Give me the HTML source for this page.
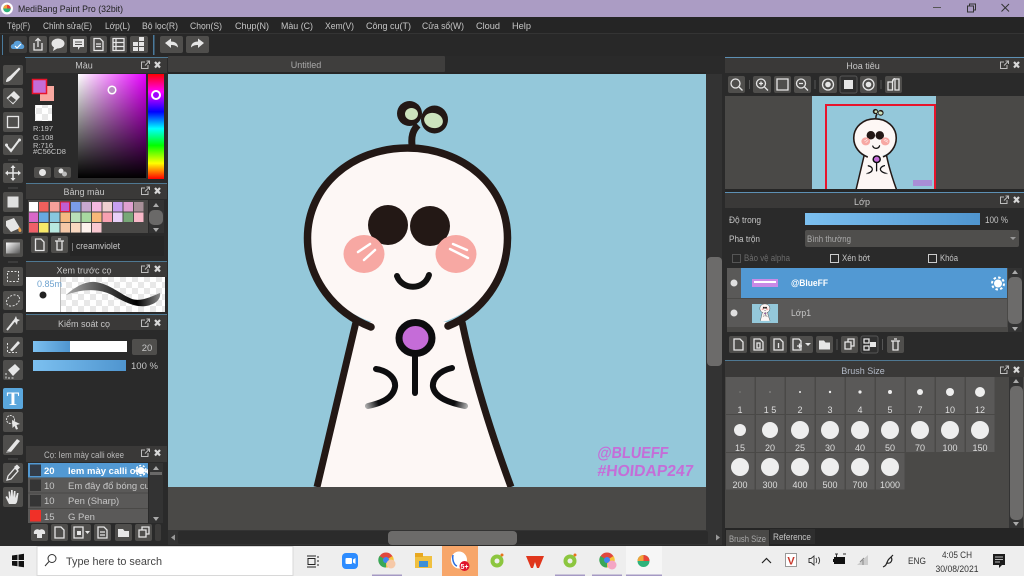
<!DOCTYPE html>
<html><head><meta charset="utf-8"><title>MediBang Paint Pro</title>
<style>
html,body{margin:0;padding:0;background:#262626;overflow:hidden}
svg{display:block;filter:blur(.3px)}
text{font-family:"Liberation Sans",sans-serif;font-size:9px;fill:#c6c6c6}
.b{fill:#4f4e4c}
.ti{fill:#3a3938}
.c{text-anchor:middle}
.w{fill:none;stroke:#e6e6e6;stroke-width:1.3}
.f{fill:#e6e6e6}
.s{fill:#5a5958}
.m{font-size:9.5px}
.k{fill:#222;font-size:9.5px}
</style></head><body>
<svg xmlns="http://www.w3.org/2000/svg" width="1024" height="576" viewBox="0 0 1024 576">
<defs>
<linearGradient id="blue" x1="0" x2="1" y1="0" y2="0"><stop offset="0" stop-color="#7cc0f0"/><stop offset="1" stop-color="#4f95cf"/></linearGradient>
<linearGradient id="pk" x1="0" x2="1" y1="0" y2="0"><stop offset="0" stop-color="#fff"/><stop offset="1" stop-color="#e600ff"/></linearGradient>
<linearGradient id="bk" x1="0" x2="0" y1="0" y2="1"><stop offset="0" stop-color="#000" stop-opacity="0"/><stop offset="1" stop-color="#000"/></linearGradient>
<linearGradient id="hue" x1="0" x2="0" y1="0" y2="1"><stop offset="0" stop-color="#f00"/><stop offset=".17" stop-color="#f0f"/><stop offset=".36" stop-color="#00f"/><stop offset=".52" stop-color="#0ff"/><stop offset=".68" stop-color="#0f0"/><stop offset=".85" stop-color="#ff0"/><stop offset="1" stop-color="#f00"/></linearGradient>
<linearGradient id="stk" x1="0" x2="1" y1="0" y2="0"><stop offset="0" stop-color="#aaa"/><stop offset=".35" stop-color="#555"/><stop offset=".75" stop-color="#000"/><stop offset="1" stop-color="#888"/></linearGradient>
<linearGradient id="grad" x1="0" x2="1" y1="0" y2="1"><stop offset="0" stop-color="#fff"/><stop offset="1" stop-color="#555"/></linearGradient>
<linearGradient id="fl" gradientUnits="userSpaceOnUse" x1="366" x2="378" y1="406" y2="402"><stop offset="0" stop-color="#aaa"/><stop offset="1" stop-color="#0d0d0f"/></linearGradient>
<linearGradient id="fr" gradientUnits="userSpaceOnUse" x1="467" x2="455" y1="406" y2="402"><stop offset="0" stop-color="#aaa"/><stop offset="1" stop-color="#0d0d0f"/></linearGradient>
<pattern id="chk" width="12" height="12" patternUnits="userSpaceOnUse"><rect width="12" height="12" fill="#fff"/><rect width="6" height="6" fill="#e8e8e8"/><rect x="6" y="6" width="6" height="6" fill="#e8e8e8"/></pattern>
<clipPath id="navc"><rect x="812" y="96" width="124" height="93"/></clipPath>
<clipPath id="lay"><rect x="752" y="304" width="26" height="19"/></clipPath>
<clipPath id="lst"><rect x="28" y="463" width="120" height="60"/></clipPath>
<g id="po"><path d="M-1 -3H-4.5V3.5H2V0M-1 0.5L3 -3.5M0.5 -4H3.5V-1" fill="none" stroke="#bdbdbd" stroke-width="1"/><path d="M9 -3L14 2.5M14 -3L9 2.5" stroke="#d8d8d8" stroke-width="2.2"/></g>
<g id="art">
<path d="M355 322L317 487H511C490 430 474 375 463 322Z" fill="#fdf7f5"/>
<ellipse cx="407.500" cy="238" rx="100" ry="90" fill="#fdf7f5"/>
<path d="M371 327C335 313 307.500 280 307.500 238C307.500 186 352 148 407.500 148C463 148 507.500 186 507.500 238C507.500 280 480 313 448 326" fill="none" stroke="#231815" stroke-width="7.500" stroke-linecap="round"/>
<path d="M356 322L317 487M462 322C473 375 490 430 511 487" fill="none" stroke="#231815" stroke-width="7"/>
<path d="M412 145C411 136 413 130 418 125" fill="none" stroke="#231815" stroke-width="7"/>
<ellipse cx="409.500" cy="113.500" rx="12.500" ry="12.500" fill="#231815"/>
<ellipse cx="434.500" cy="119.500" rx="13.500" ry="14" fill="#231815"/>
<ellipse cx="411.500" cy="114" rx="6.500" ry="6" fill="#cde3bd"/>
<ellipse cx="433.500" cy="120.500" rx="9.500" ry="7.500" transform="rotate(15 433.500 120.500)" fill="#cde3bd"/>
<circle cx="388" cy="225" r="20" fill="#231815"/><circle cx="430" cy="226" r="20" fill="#231815"/>
<ellipse cx="364" cy="254" rx="20.500" ry="19" fill="#f7a8a3"/><ellipse cx="456" cy="254" rx="20.500" ry="19" fill="#f7a8a3"/>
<path d="M358 252L370 244M364 260L375 250M453 244L467 250M450 249L468 258" stroke="#fff" stroke-width="2.500" stroke-linecap="round"/>
<path d="M397 276C402 290 424 291 429 275" fill="none" stroke="#111" stroke-width="6" stroke-linecap="round"/>
<ellipse cx="415.500" cy="338" rx="16.500" ry="15.500" fill="#c56cd8" stroke="#0d0d0f" stroke-width="7"/>
<path d="M415 355V393" stroke="#0d0d0f" stroke-width="6" stroke-linecap="round"/>
<path d="M376 369C390 371 396 380 395 387C393 398 382 403 368 406" fill="none" stroke="url(#fl)" stroke-width="6" stroke-linecap="round"/>
<path d="M452 368C438 371 432 380 433 387C435 398 450 403 465 406" fill="none" stroke="url(#fr)" stroke-width="6" stroke-linecap="round"/>
</g>
</defs>

<!-- title bar -->
<rect width="1024" height="17" fill="#ab9cc4"/>
<circle cx="7" cy="8.500" r="6" fill="#fff"/><circle cx="7" cy="8.500" r="3.800" fill="#2fb37b"/><path d="M7 4.700A3.800 3.800 0 0 1 10.800 8.500H7Z" fill="#e8443a"/><path d="M3.200 8.500A3.800 3.800 0 0 1 7 4.700V8.500Z" fill="#f2a33a"/>
<text x="18" y="12" class="k" textLength="105" lengthAdjust="spacingAndGlyphs">MediBang Paint Pro (32bit)</text>
<path d="M933 7.500H941" stroke="#555" stroke-width="1"/>
<path d="M967.500 6H973.500V12H967.500ZM969.500 6V4H975.500V10H973.500" fill="none" stroke="#333" stroke-width="1"/>
<path d="M1001.500 4L1009 11.500M1009 4L1001.500 11.500" stroke="#333" stroke-width="1"/>

<!-- menu -->
<rect y="17" width="1024" height="16" fill="#252525"/>
<rect y="33" width="1024" height="1" fill="#343434"/>
<g class="mn">
<text x="7" y="29" class="m" textLength="23" lengthAdjust="spacingAndGlyphs">Tệp(F)</text>
<text x="43" y="29" class="m" textLength="49" lengthAdjust="spacingAndGlyphs">Chỉnh sửa(E)</text>
<text x="105" y="29" class="m" textLength="25" lengthAdjust="spacingAndGlyphs">Lớp(L)</text>
<text x="142" y="29" class="m" textLength="36" lengthAdjust="spacingAndGlyphs">Bộ lọc(R)</text>
<text x="190" y="29" class="m" textLength="32" lengthAdjust="spacingAndGlyphs">Chọn(S)</text>
<text x="235" y="29" class="m" textLength="34" lengthAdjust="spacingAndGlyphs">Chụp(N)</text>
<text x="281" y="29" class="m" textLength="32" lengthAdjust="spacingAndGlyphs">Màu (C)</text>
<text x="325" y="29" class="m" textLength="29" lengthAdjust="spacingAndGlyphs">Xem(V)</text>
<text x="366" y="29" class="m" textLength="45" lengthAdjust="spacingAndGlyphs">Công cụ(T)</text>
<text x="422" y="29" class="m" textLength="42" lengthAdjust="spacingAndGlyphs">Cửa sổ(W)</text>
<text x="476" y="29" class="m" textLength="24" lengthAdjust="spacingAndGlyphs">Cloud</text>
<text x="512" y="29" class="m" textLength="19" lengthAdjust="spacingAndGlyphs">Help</text>
</g>

<!-- toolbar -->
<rect y="34" width="1024" height="22" fill="#282828"/>
<rect x="2" y="35" width="1" height="20" fill="#4a7a9c"/>
<rect x="153" y="35" width="1.500" height="20" fill="#4a7a9c"/>
<rect x="9" y="36" width="18" height="17" rx="2" fill="#3f3e3d"/>
<path d="M13 49C10 49 10 44 13.500 44C14 40 21 39.500 22 44C25 44.500 25 49 22 49Z" fill="#5a9fd8"/>
<path d="M15 46L17 48L21 44" stroke="#fff" stroke-width="1.200" fill="none"/>
<rect x="29" y="36" width="18" height="17" rx="2" class="b"/><path d="M34 43V50H42V43M38 47V39M35.500 41L38 38.500L40.500 41" class="w"/>
<rect x="49" y="36" width="18" height="17" rx="2" class="b"/><ellipse cx="58" cy="43.500" rx="6.500" ry="5" class="f"/><path d="M54 47L53 51L58 48Z" class="f"/>
<rect x="70" y="36" width="17" height="17" rx="2" class="b"/><path d="M73 39H84V47H80L78 50V47H73Z" class="f"/><path d="M75 42H82M75 44.500H82" stroke="#4f4e4c"/>
<rect x="90" y="36" width="17" height="17" rx="2" class="b"/><path d="M94 38.500H100L103 41.500V50.500H94Z M96 44H101M96 46.500H101" class="w"/>
<rect x="110" y="36" width="17" height="17" rx="2" class="b"/><path d="M113 38.500H124V50.500H113ZM113 42.500H124M113 46.500H124M116 38.500V50.500" class="w"/>
<rect x="130" y="36" width="18" height="17" rx="2" class="b"/><path d="M133 42H138V46H133ZM139 42H144V46H139ZM133 47H138V51H133ZM139 47H144V51H139ZM139 37H144V41H139Z" class="f"/>
<rect x="160" y="36" width="23" height="17" rx="2" class="b"/><path d="M165 43L171 38.500V41.500C175 41.500 178 43.500 178 47.500C176 45.500 174 45 171 45V48Z" class="f"/>
<rect x="186" y="36" width="23" height="17" rx="2" class="b"/><path d="M204 43L198 38.500V41.500C194 41.500 191 43.500 191 47.500C193 45.500 195 45 198 45V48Z" class="f"/>

<!-- left column background -->
<rect y="56" width="168" height="490" fill="#2a2a2a"/>
<rect x="25" y="57" width="143" height="1" fill="#4f7892"/>

<!-- tools -->
<rect x="3" y="65" width="20" height="20" rx="2" class="b"/><path d="M6 82C6 79 8 77 10 76L19 67.500L20.500 69L12.500 78C11 80 9 82 6 82Z" class="f"/>
<rect x="3" y="88" width="20" height="20" rx="2" class="b"/><path d="M6.500 98L14 91L20 97L13 104.500Z" class="f"/><path d="M8 99L13 103L16 100L11 96Z" fill="#4f4e4c"/>
<rect x="3" y="112" width="20" height="20" rx="2" class="b"/><rect x="7.500" y="116.500" width="11" height="11" class="w"/>
<rect x="3" y="135" width="20" height="20" rx="2" class="b"/><path d="M6 145L11 151L20 139" fill="none" stroke="#e6e6e6" stroke-width="2"/><circle cx="6.500" cy="145" r="1.500" class="f"/><circle cx="11" cy="150" r="1.500" class="f"/><circle cx="19.500" cy="140" r="1.500" class="f"/>
<path d="M8 160H18M8 188H18M8 262H18M8 459H18" stroke="#4d4d4d"/>
<rect x="3" y="163" width="20" height="20" rx="2" class="b"/><path d="M13 166V180M6 173H20" stroke="#e6e6e6" stroke-width="1.500"/><path d="M13 165L10.500 168H15.500ZM13 181L10.500 178H15.500ZM5 173L8 170.500V175.500ZM21 173L18 170.500V175.500Z" class="f"/>
<rect x="3" y="192" width="20" height="20" rx="2" class="b"/><rect x="7.500" y="196.500" width="11" height="11" fill="#e0e0e0"/>
<rect x="3" y="216" width="20" height="18" rx="2" class="b"/><path d="M6 221L14 218L20 228L11 232L6 226Z" class="f"/><path d="M19 227C22 229 22 232 20 232C18 232 18 229 19 227Z" fill="#e8a04a"/>
<rect x="3" y="239" width="20" height="18" rx="2" class="b"/><rect x="6" y="242.500" width="14" height="11" fill="url(#grad)"/>
<rect x="3" y="267" width="20" height="19" rx="2" class="b"/><rect x="7.500" y="271.500" width="11" height="10" fill="none" stroke="#ddd" stroke-dasharray="2 1.500"/>
<rect x="3" y="291" width="20" height="19" rx="2" class="b"/><ellipse cx="13" cy="300.500" rx="7" ry="5" transform="rotate(-30 13 300.500)" fill="none" stroke="#ddd" stroke-dasharray="2 1.500"/>
<rect x="3" y="313" width="20" height="20" rx="2" class="b"/><path d="M7 330L15 320" stroke="#e6e6e6" stroke-width="2"/><path d="M16 316L17 319L20 320L17.500 321.500L17 325L15 322L12 322L14 320Z" class="f"/>
<rect x="3" y="337" width="20" height="20" rx="2" class="b"/><path d="M7.500 343V352.500H17" fill="none" stroke="#ddd" stroke-dasharray="2 1.500"/><path d="M10 350L18 341L20 343L12 351.500Z" class="f"/>
<rect x="3" y="360" width="20" height="20" rx="2" class="b"/><path d="M8 370L15 364L20 369L13 376Z" class="f"/><path d="M6 373V378H14" fill="none" stroke="#ddd" stroke-dasharray="2 1.500"/>
<rect x="3" y="388" width="20" height="21" rx="2" fill="#5aa7dd"/>
<text x="13" y="405" class="c" style="font-family:'Liberation Serif',serif;font-size:19px;font-weight:bold;fill:#fff">T</text>
<rect x="3" y="412" width="20" height="20" rx="2" class="b"/><circle cx="10.500" cy="419.500" r="4" fill="none" stroke="#ddd" stroke-dasharray="2 1"/><path d="M12 420L20 424L16.500 425L18 429L16 429.500L14.500 426L12.500 428Z" class="f"/>
<rect x="3" y="435" width="20" height="20" rx="2" class="b"/><path d="M7 451L17 439L20 441L11 452Z" class="f"/><path d="M7 451L11 452L6 453Z" fill="#aaa"/>
<rect x="3" y="463" width="20" height="20" rx="2" class="b"/><path d="M7 480L8 476L15 468L18 471L11 479Z" fill="none" stroke="#e6e6e6" stroke-width="1.300"/><path d="M14 467L17 464.500L20 467.500L17.500 470Z" class="f"/>
<rect x="3" y="487" width="20" height="20" rx="2" class="b"/><path d="M9 504L5.500 497L7 496L9 499L8.500 491.500H10L11 497L11 490H12.700L13 497L14 491H15.500L15.500 498L17 493H18.500L17.500 500C17 503 16 504 15 504Z" class="f"/>

<!-- colour panel -->
<rect x="26" y="58" width="141" height="15" class="ti"/>
<text x="84" y="68.500" class="c">Màu</text><use href="#po" x="146" y="65"/>
<rect x="40" y="86" width="14" height="15" fill="#f8a8a0"/>
<rect x="32.500" y="79.500" width="14" height="14" fill="#c56cd8" stroke="#e8142c" stroke-width="1.500"/>
<rect x="35" y="105" width="17" height="16" fill="url(#chk)"/>
<g><text x="33" y="131" style="font-size:7.500px">R:197</text><text x="33" y="140" style="font-size:7.500px">G:108</text><text x="33" y="148" style="font-size:7.500px">R:716</text><text x="33" y="154" style="font-size:7.500px">#C56CD8</text></g>
<rect x="34" y="167" width="17" height="11" rx="2" class="b"/><circle cx="42.500" cy="172.500" r="3.500" class="f"/>
<rect x="54" y="167" width="17" height="11" rx="2" class="b"/><circle cx="61" cy="171" r="2.500" class="f"/><circle cx="64.500" cy="174" r="2.500" fill="#bbb"/>
<rect x="78" y="74" width="68" height="104" fill="url(#pk)"/><rect x="78" y="74" width="68" height="104" fill="url(#bk)"/>
<circle cx="112" cy="90" r="3.800" fill="#b88cc2" stroke="#fff" stroke-width="1.500"/>
<rect x="148" y="74" width="16" height="105" fill="url(#hue)"/>
<circle cx="156" cy="95" r="4" fill="#a000ff" stroke="#fff" stroke-width="2"/>
<rect x="26" y="183" width="141" height="1" fill="#4f7892"/>

<!-- palette panel -->
<rect x="26" y="184" width="141" height="15" class="ti"/>
<text x="84" y="195" class="c">Bảng màu</text><use href="#po" x="146" y="191"/>
<rect x="28" y="200" width="120" height="33" fill="#4a4947"/>
<g>
<rect x="29" y="202" width="9" height="9.500" fill="#fff"/><rect x="39" y="202" width="9.500" height="9.500" fill="#f0605c"/><rect x="50" y="202" width="9.500" height="9.500" fill="#f5a09a"/><rect x="60.500" y="202" width="9" height="9.500" fill="#c05ed0" stroke="#e0203a"/><rect x="71" y="202" width="9.500" height="9.500" fill="#7a9ce8"/><rect x="81.500" y="202" width="9.500" height="9.500" fill="#c8a8d0"/><rect x="92" y="202" width="9.500" height="9.500" fill="#f5b8e0"/><rect x="102.500" y="202" width="9.500" height="9.500" fill="#f0d0d0"/><rect x="113" y="202" width="9.500" height="9.500" fill="#c8a0f0"/><rect x="123.500" y="202" width="9.500" height="9.500" fill="#e0a0d0"/><rect x="134" y="202" width="9.500" height="9.500" fill="#a89098"/>
<rect x="29" y="212.500" width="9" height="9.500" fill="#d868c8"/><rect x="39" y="212.500" width="9.500" height="9.500" fill="#68a8e0"/><rect x="50" y="212.500" width="9.500" height="9.500" fill="#88c8e0"/><rect x="60.500" y="212.500" width="9.500" height="9.500" fill="#f5b880"/><rect x="71" y="212.500" width="9.500" height="9.500" fill="#b8e0b8"/><rect x="81.500" y="212.500" width="9.500" height="9.500" fill="#a8d8a0"/><rect x="92" y="212.500" width="9.500" height="9.500" fill="#f8b878"/><rect x="102.500" y="212.500" width="9.500" height="9.500" fill="#f8a0b0"/><rect x="113" y="212.500" width="9.500" height="9.500" fill="#e8d0f8"/><rect x="123.500" y="212.500" width="9.500" height="9.500" fill="#78a878"/><rect x="134" y="212.500" width="9.500" height="9.500" fill="#f8b8c8"/>
<rect x="29" y="223" width="9" height="9.500" fill="#f06068"/><rect x="39" y="223" width="9.500" height="9.500" fill="#f8e868"/><rect x="50" y="223" width="9.500" height="9.500" fill="#b8e8e0"/><rect x="60.500" y="223" width="9.500" height="9.500" fill="#f5c8a8"/><rect x="71" y="223" width="9.500" height="9.500" fill="#f8d8c0"/><rect x="81.500" y="223" width="9.500" height="9.500" fill="#fdf2ec"/><rect x="92" y="223" width="9.500" height="9.500" fill="#f8c8d0"/>
</g>
<rect x="149" y="200" width="15" height="33" fill="#333"/>
<rect x="149" y="210" width="14" height="15" rx="5" fill="#6a6968"/>
<path d="M156 203L153 207H159ZM156 232L153 228H159Z" fill="#aaa"/>
<rect x="70" y="236" width="94" height="20" fill="#262626"/>
<rect x="31" y="236" width="17" height="17" rx="2" class="b"/><path d="M35.500 239H41L44 242V250.500H35.500Z" class="w"/>
<rect x="51" y="236" width="17" height="17" rx="2" class="b"/><path d="M55 241H64M57 241V250H62V241M58 239H61" class="w"/>
<rect x="72" y="243" width="1" height="8" fill="#777"/>
<text x="76" y="249" textLength="44" lengthAdjust="spacingAndGlyphs">creamviolet</text>
<rect x="26" y="261" width="141" height="1" fill="#4f7892"/>

<!-- brush preview -->
<rect x="26" y="262" width="141" height="15" class="ti"/>
<text x="84" y="273.500" class="c">Xem trước cọ</text><use href="#po" x="146" y="269"/>
<rect x="26" y="277" width="35" height="35" fill="#fff"/>
<rect x="60" y="277" width="105" height="35" fill="url(#chk)"/>
<rect x="60" y="277" width="1" height="35" fill="#bbb"/>
<text x="37" y="287" style="fill:#6fa3cf;font-size:9px">0.85m</text>
<circle cx="43" cy="295" r="3.500" fill="#222"/>
<path d="M66 295C75 287 85 281 95 282C108 283 120 294 132 299C142 302 152 296 160 293C161 297 158 303 150 305C138 309 126 303 112 295C100 289 85 288 66 295Z" fill="url(#stk)"/>
<rect x="26" y="314" width="141" height="1" fill="#4f7892"/>

<!-- brush control -->
<rect x="26" y="315" width="141" height="15" class="ti"/>
<text x="84" y="327" class="c">Kiểm soát cọ</text><use href="#po" x="146" y="323"/>
<rect x="33" y="341" width="94" height="11" fill="#fff"/><rect x="33" y="341" width="37" height="11" fill="url(#blue)"/>
<rect x="132" y="339" width="25" height="16" rx="2" class="b"/><text x="147" y="351" class="c" style="font-size:9.500px">20</text>
<rect x="33" y="360" width="93" height="11" fill="url(#blue)"/>
<text x="131" y="369" textLength="27" lengthAdjust="spacingAndGlyphs" style="font-size:9.500px">100 %</text>

<!-- brush list -->
<rect x="26" y="446" width="141" height="16" class="ti"/>
<text x="84" y="458" class="c" textLength="80" lengthAdjust="spacingAndGlyphs" style="fill:#b8b8b8">Cọ: Iem mày calli okee</text><use href="#po" x="146" y="453"/>
<rect x="28" y="463" width="120" height="60" fill="#4a4947"/>
<rect x="28" y="463" width="120" height="14.500" fill="#5299d3"/>
<rect x="28" y="478" width="120" height="14.500" class="s"/>
<rect x="28" y="493.500" width="120" height="14.500" class="s"/>
<rect x="28" y="509" width="120" height="14" class="s"/>
<rect x="30" y="464.500" width="11" height="11.500" fill="#333c48"/>
<rect x="30" y="479.500" width="11" height="11.500" fill="#353535"/>
<rect x="30" y="495" width="11" height="11.500" fill="#353535"/>
<rect x="30" y="510" width="11" height="11.500" fill="#f03028"/>
<g clip-path="url(#lst)">
<text x="44" y="474" style="font-size:9.500px;font-weight:bold;fill:#fff">20</text><text x="68" y="474" style="font-size:9.500px;font-weight:bold;fill:#fff">Iem mày calli okee</text>
<text x="44" y="489" style="font-size:9.500px">10</text><text x="68" y="489" style="font-size:9.500px">Em đây đổ bóng cute</text>
<text x="44" y="504" style="font-size:9.500px">10</text><text x="68" y="504" style="font-size:9.500px">Pen (Sharp)</text>
<text x="44" y="520" style="font-size:9.500px">15</text><text x="68" y="520" style="font-size:9.500px">G Pen</text>
</g>
<circle cx="141" cy="470.500" r="3.500" fill="#fff"/><circle cx="141" cy="470.500" r="5" fill="none" stroke="#fff" stroke-width="1.500" stroke-dasharray="2 1.600"/>
<rect x="149" y="463" width="14" height="60" fill="#333"/>
<rect x="150" y="472" width="12" height="3" fill="#6a6968"/>
<path d="M156 466L153 470H159ZM156 521L153 517H159Z" fill="#aaa"/>
<rect x="31" y="524" width="17" height="17" rx="2" class="b"/><path d="M34 534C33 530 37 528 39.500 530C42 528 46 530 45 534H42V538H37V534Z" class="f"/>
<rect x="51" y="524" width="17" height="17" rx="2" class="b"/><path d="M55 527H61L64 530V538H55Z" class="w"/>
<rect x="71" y="524" width="20" height="17" rx="2" class="b"/><path d="M74 527H83V538H74Z" class="w"/><path d="M77 531H81V535H77Z" class="f"/><path d="M85 531H90L87.500 534Z" class="f"/>
<rect x="94" y="524" width="17" height="17" rx="2" class="b"/><path d="M98 527H104L107 530V538H98ZM100 532H105M100 535H105" class="w"/>
<rect x="115" y="524" width="17" height="17" rx="2" class="b"/><path d="M118 529H123L124.500 531H129V537H118Z" class="f"/>
<rect x="135" y="524" width="17" height="17" rx="2" class="b"/><path d="M139 530H146V537H139ZM142 530V527H149V534H146" class="w"/>
<rect x="155" y="524" width="6" height="17" rx="2" fill="#3d3c3b"/>

<!-- canvas region -->
<rect x="168" y="56" width="557" height="490" fill="#2a2a2a"/>
<rect x="168" y="56" width="277" height="16" rx="1" fill="#3f3e3d"/>
<text x="306" y="68" class="c" style="fill:#a9a9a9">Untitled</text>
<rect x="168" y="72" width="538" height="2" fill="#262626"/>
<rect x="168" y="74" width="538" height="413" fill="#94c8da"/>
<use href="#art"/>
<rect x="168" y="487" width="538" height="43" fill="#4a4947"/>
<text x="0" y="0" transform="translate(597 458) skewX(-6)" style="font-size:16px;font-weight:bold;fill:#c46ed8" textLength="71" lengthAdjust="spacingAndGlyphs">@BLUEFF</text>
<text x="0" y="0" transform="translate(597 476) skewX(-6)" style="font-size:16px;font-weight:bold;fill:#c46ed8" textLength="96" lengthAdjust="spacingAndGlyphs">#HOIDAP247</text>
<rect x="706" y="74" width="16" height="456" fill="#333"/>
<rect x="707" y="257" width="15" height="109" rx="4" fill="#6c6b6a"/>
<rect x="168" y="530" width="554" height="15" fill="#333"/>
<rect x="178" y="531" width="530" height="13" rx="2" fill="#2b2b2b"/>
<rect x="388" y="531" width="129" height="14" rx="4" fill="#6c6b6a"/>
<path d="M171 537.500L175 534.500V540.500ZM720 537.500L716 534.500V540.500Z" fill="#9a9a9a"/>

<!-- right panels -->
<rect x="725" y="56" width="299" height="490" fill="#2a2a2a"/>
<rect x="725" y="57" width="299" height="1" fill="#5d90b4"/>
<rect x="725" y="58" width="299" height="15" class="ti"/>
<text x="863" y="69" class="c">Hoa tiêu</text><use href="#po" x="1005" y="65"/>
<rect x="728" y="76" width="17" height="17" rx="2" class="b"/><circle cx="735.500" cy="83.500" r="4.500" class="w"/><path d="M739 87L742.500 90.500" class="w"/>
<rect x="753" y="76" width="18" height="17" rx="2" class="b"/><circle cx="761" cy="83.500" r="4.500" class="w"/><path d="M764.500 87L768 90.500M759 83.500H763M761 81.500V85.500" class="w"/>
<rect x="774" y="76" width="17" height="17" rx="2" class="b"/><path d="M777 79H788V90H777Z" class="w"/>
<rect x="794" y="76" width="17" height="17" rx="2" class="b"/><circle cx="801" cy="83.500" r="4.500" class="w"/><path d="M804.500 87L808 90.500M799 83.500H803" class="w"/>
<rect x="819" y="76" width="18" height="17" rx="2" class="b"/><circle cx="828" cy="84.500" r="5.500" class="w"/><circle cx="828" cy="84.500" r="2.800" class="f"/>
<rect x="840" y="76" width="17" height="17" rx="2" fill="#2f2f2f" stroke="#555"/><path d="M844 80H853V89H844Z" class="f"/>
<rect x="860" y="76" width="17" height="17" rx="2" class="b"/><circle cx="868.500" cy="84.500" r="5.500" class="w"/><circle cx="868.500" cy="84.500" r="2.800" class="f"/>
<rect x="885" y="76" width="17" height="17" rx="2" class="b"/><path d="M888 82H892.500V90H888ZM895 79H899V90H895V79M892.500 82C892.500 79 895 78 895 79" class="w"/>
<path d="M749.500 80V89M815 80V89M881 80V89" stroke="#555"/>
<rect x="725" y="96" width="299" height="93" fill="#4a4947"/>
<g clip-path="url(#navc)">
<rect x="812" y="96" width="124" height="93" fill="#94c8da"/>
<use href="#art" transform="translate(788.400 87.400) scale(.2125)"/>
<rect x="913" y="180" width="19" height="6" fill="#a98ed6"/>
</g>
<rect x="826" y="105" width="109" height="90" fill="none" stroke="#e8142c" stroke-width="2"/>
<rect x="725" y="189" width="299" height="3" fill="#262626"/>
<rect x="725" y="192" width="299" height="1" fill="#5d90b4"/>
<rect x="725" y="193" width="299" height="15" class="ti"/>
<text x="862" y="205" class="c">Lớp</text><use href="#po" x="1005" y="200"/>
<text x="729" y="223" textLength="32" lengthAdjust="spacingAndGlyphs">Độ trong</text>
<rect x="805" y="213" width="175" height="12" fill="url(#blue)"/>
<text x="985" y="223" textLength="23" lengthAdjust="spacingAndGlyphs">100 %</text>
<text x="729" y="242" textLength="31" lengthAdjust="spacingAndGlyphs">Pha trộn</text>
<rect x="805" y="230" width="214" height="17" rx="2" class="b"/>
<text x="807" y="242" textLength="44" lengthAdjust="spacingAndGlyphs" style="fill:#aaa">Bình thường</text>
<path d="M1010 237H1016L1013 240Z" fill="#999"/>
<rect x="732.500" y="254.500" width="8" height="8" fill="none" stroke="#555"/>
<text x="744" y="261" textLength="46" lengthAdjust="spacingAndGlyphs" style="fill:#6c6c6c">Bảo vệ alpha</text>
<rect x="830.500" y="254.500" width="8" height="8" fill="none" stroke="#ccc"/>
<text x="842" y="261" textLength="28" lengthAdjust="spacingAndGlyphs">Xén bớt</text>
<rect x="928.500" y="254.500" width="8" height="8" fill="none" stroke="#ccc"/>
<text x="940" y="261" textLength="18" lengthAdjust="spacingAndGlyphs">Khóa</text>
<rect x="727" y="268" width="281" height="64" fill="#4a4947"/>
<rect x="727" y="268" width="14" height="30" class="s"/>
<rect x="741" y="268" width="266" height="30" fill="#5299d3"/>
<rect x="727" y="299" width="280" height="28" class="s"/>
<circle cx="734" cy="283" r="3.500" fill="#e0e0e0"/><circle cx="734" cy="313" r="3.500" fill="#e0e0e0"/>
<rect x="752" y="279" width="26" height="8" fill="#c98ae6"/><rect x="754" y="281" width="22" height="2" fill="#fff"/>
<text x="791" y="286" textLength="37" lengthAdjust="spacingAndGlyphs" style="font-weight:bold;fill:#fff">@BlueFF</text>
<circle cx="998" cy="283.500" r="4" fill="#fff"/><circle cx="998" cy="283.500" r="6" fill="none" stroke="#fff" stroke-width="2" stroke-dasharray="2.500 2.200"/>
<rect x="752" y="304" width="26" height="19" fill="#94c8da"/>
<g clip-path="url(#lay)"><use href="#art" transform="translate(744.500 296.500) scale(.05)"/></g>
<text x="791" y="316" textLength="20" lengthAdjust="spacingAndGlyphs">Lớp1</text>
<rect x="1008" y="268" width="14" height="64" fill="#333"/>
<rect x="1008" y="277" width="14" height="47" rx="5" fill="#6c6b6a"/>
<path d="M1015 270L1012 274H1018ZM1015 331L1012 327H1018Z" fill="#aaa"/>
<rect x="729" y="336" width="18" height="17" rx="2" class="b"/><path d="M734 339H740L743 342V350H734Z" class="w"/>
<rect x="750" y="336" width="17" height="17" rx="2" class="b"/><path d="M754 339H760L763 342V350H754ZM757 343H760V348H757Z" class="w"/>
<rect x="770" y="336" width="17" height="17" rx="2" class="b"/><path d="M774 339H780L783 342V350H774ZM778.500 343V348" class="w"/>
<rect x="790" y="336" width="23" height="17" rx="2" class="b"/><path d="M793 339H799L801 341V350H793ZM797 346H802M799.500 343.500V348.500" class="w"/><path d="M805 343H811L808 346Z" class="f"/>
<rect x="816" y="336" width="17" height="17" rx="2" class="b"/><path d="M819 340.500H824L825.500 342.500H830V349.500H819Z" class="f"/>
<rect x="841" y="336" width="17" height="17" rx="2" class="b"/><path d="M845 342H851V349H845ZM848 342V339H854V346H851" class="w"/>
<rect x="861" y="336" width="17" height="17" rx="2" fill="#2f2f2f" stroke="#555"/><path d="M864 339H869V343H864ZM864 346H869V350H864Z" class="w"/><rect x="870" y="342" width="6" height="5" class="f"/>
<rect x="887" y="336" width="17" height="17" rx="2" class="b"/><path d="M891 341H900M893 341V350H898V341M894 339H897" class="w"/>
<path d="M837 339V350M882.500 339V350" stroke="#555"/>
<rect x="725" y="360" width="299" height="1" fill="#4f7892"/>

<!-- brush size -->
<rect x="725" y="361" width="299" height="16" class="ti"/>
<rect x="725" y="377" width="299" height="151" fill="#4a4947"/>
<text x="863" y="374" class="c" style="fill:#b4bbc8">Brush Size</text><use href="#po" x="1005" y="370"/>
<g class="s">
<rect x="726" y="377" width="28.500" height="37"/><rect x="756" y="377" width="28.500" height="37"/><rect x="786" y="377" width="28.500" height="37"/><rect x="816" y="377" width="28.500" height="37"/><rect x="846" y="377" width="28.500" height="37"/><rect x="876" y="377" width="28.500" height="37"/><rect x="906" y="377" width="28.500" height="37"/><rect x="936" y="377" width="28.500" height="37"/><rect x="966" y="377" width="28.500" height="37"/>
<rect x="726" y="415" width="28.500" height="37"/><rect x="756" y="415" width="28.500" height="37"/><rect x="786" y="415" width="28.500" height="37"/><rect x="816" y="415" width="28.500" height="37"/><rect x="846" y="415" width="28.500" height="37"/><rect x="876" y="415" width="28.500" height="37"/><rect x="906" y="415" width="28.500" height="37"/><rect x="936" y="415" width="28.500" height="37"/><rect x="966" y="415" width="28.500" height="37"/>
<rect x="726" y="453" width="28.500" height="36.500"/><rect x="756" y="453" width="28.500" height="36.500"/><rect x="786" y="453" width="28.500" height="36.500"/><rect x="816" y="453" width="28.500" height="36.500"/><rect x="846" y="453" width="28.500" height="36.500"/><rect x="876" y="453" width="28.500" height="36.500"/>
</g>
<g fill="#eee">
<circle cx="740" cy="392" r=".4"/><circle cx="770" cy="392" r=".5"/><circle cx="800" cy="392" r="1"/><circle cx="830" cy="392" r="1.200"/><circle cx="860" cy="392" r="1.600"/><circle cx="890" cy="392" r="2"/><circle cx="920" cy="392" r="3"/><circle cx="950" cy="392" r="4"/><circle cx="980" cy="392" r="5"/>
<circle cx="740" cy="430" r="6"/><circle cx="770" cy="430" r="8"/><circle cx="800" cy="430" r="9"/><circle cx="830" cy="430" r="9"/><circle cx="860" cy="430" r="9"/><circle cx="890" cy="430" r="9"/><circle cx="920" cy="430" r="9"/><circle cx="950" cy="430" r="9"/><circle cx="980" cy="430" r="9"/>
<circle cx="740" cy="467" r="9"/><circle cx="770" cy="467" r="9"/><circle cx="800" cy="467" r="9"/><circle cx="830" cy="467" r="9"/><circle cx="860" cy="467" r="9"/><circle cx="890" cy="467" r="9"/>
</g>
<g>
<text x="740" y="413" class="c" style="fill:#ddd">1</text><text x="770" y="413" class="c" style="fill:#ddd">1 5</text><text x="800" y="413" class="c" style="fill:#ddd">2</text><text x="830" y="413" class="c" style="fill:#ddd">3</text><text x="860" y="413" class="c" style="fill:#ddd">4</text><text x="890" y="413" class="c" style="fill:#ddd">5</text><text x="920" y="413" class="c" style="fill:#ddd">7</text><text x="950" y="413" class="c" style="fill:#ddd">10</text><text x="980" y="413" class="c" style="fill:#ddd">12</text>
<text x="740" y="451" class="c" style="fill:#ddd">15</text><text x="770" y="451" class="c" style="fill:#ddd">20</text><text x="800" y="451" class="c" style="fill:#ddd">25</text><text x="830" y="451" class="c" style="fill:#ddd">30</text><text x="860" y="451" class="c" style="fill:#ddd">40</text><text x="890" y="451" class="c" style="fill:#ddd">50</text><text x="920" y="451" class="c" style="fill:#ddd">70</text><text x="950" y="451" class="c" style="fill:#ddd">100</text><text x="980" y="451" class="c" style="fill:#ddd">150</text>
<text x="740" y="488" class="c" style="fill:#ddd">200</text><text x="770" y="488" class="c" style="fill:#ddd">300</text><text x="800" y="488" class="c" style="fill:#ddd">400</text><text x="830" y="488" class="c" style="fill:#ddd">500</text><text x="860" y="488" class="c" style="fill:#ddd">700</text><text x="890" y="488" class="c" style="fill:#ddd">1000</text>
</g>
<rect x="1009" y="377" width="14" height="151" fill="#333"/>
<rect x="1010" y="386" width="13" height="134" rx="5" fill="#6c6b6a"/>
<path d="M1016 379L1013 383H1019ZM1016 526L1013 522H1019Z" fill="#aaa"/>
<rect x="725" y="528" width="299" height="18" fill="#252525"/>
<rect x="726" y="530" width="43" height="16" fill="#4a4947"/>
<text x="729" y="542" textLength="37" lengthAdjust="spacingAndGlyphs" style="fill:#a9a9a9">Brush Size</text>
<rect x="770" y="529" width="45" height="15" fill="#2e2e2e"/>
<text x="773" y="540" textLength="38" lengthAdjust="spacingAndGlyphs">Reference</text>

<!-- taskbar -->
<rect y="546" width="1024" height="30" fill="#eeeeee"/>
<path d="M12 555.500L17.500 554.700V560H12ZM18.500 554.600L24 553.800V560H18.500ZM12 561H17.500V566.300L12 565.500ZM18.500 561H24V567.300L18.500 566.500Z" fill="#111"/>
<rect x="37" y="546.500" width="256" height="29" fill="#fff" stroke="#d8d8d8"/>
<circle cx="52" cy="558.500" r="4" fill="none" stroke="#333"/><path d="M49 561.500L45 566" stroke="#333"/>
<text x="66" y="565" textLength="96" lengthAdjust="spacingAndGlyphs" style="font-size:11px;fill:#444">Type here to search</text>
<path d="M307 556H316M307 567H316M308 558.500H315V564.500H308ZM318 556V558M318 560V562M318 564V566" fill="none" stroke="#222"/>
<rect x="342" y="553" width="16" height="16" rx="4" fill="#2d8cff"/><rect x="345.500" y="558" width="6.500" height="6" rx="1" fill="#fff"/><path d="M353 559.500L355.500 558V564L353 562.500Z" fill="#fff"/>
<circle cx="386" cy="560" r="7.500" fill="#e0483e"/><path d="M386 560L392.500 556A7.500 7.500 0 0 1 386 567.500Z" fill="#f5c33b"/><path d="M386 560V567.500A7.500 7.500 0 0 1 379.500 556Z" fill="#3aa757"/><circle cx="386" cy="560" r="3" fill="#4285f4"/><circle cx="391" cy="564" r="4.500" fill="#f6c9a8"/>
<rect x="372" y="574.500" width="30" height="1.500" fill="#a59ac4"/>
<rect x="415" y="556" width="17" height="12" fill="#f0c040"/><rect x="415" y="553" width="8" height="4" fill="#e8a820"/><rect x="419" y="561" width="9" height="6" fill="#3d8fd8"/>
<rect x="442" y="546" width="36" height="30" fill="#f7a66a"/>
<ellipse cx="459" cy="560" rx="8" ry="8.500" fill="#fff"/><path d="M453 555C452 560 454 565 457 566" fill="none" stroke="#2b6fe0" stroke-width="1.500"/><circle cx="464.500" cy="566" r="5" fill="#e0142c"/><text x="464.500" y="569" class="c" style="font-size:7px;font-weight:bold;fill:#fff">5+</text>
<circle cx="497" cy="561" r="6.500" fill="#8cc63f"/><circle cx="497" cy="561" r="2.500" fill="#eee"/><circle cx="502" cy="555" r="1.500" fill="#e8731c"/>
<path d="M526 556H544L539 568H537L535 562L533 568H531Z" fill="#e0361c"/>
<circle cx="570" cy="561" r="6.500" fill="#8cc63f"/><circle cx="570" cy="561" r="2.500" fill="#eee"/><circle cx="575" cy="555" r="1.500" fill="#e8731c"/>
<rect x="555" y="574.500" width="30" height="1.500" fill="#a59ac4"/>
<circle cx="607" cy="560" r="7.500" fill="#e0483e"/><path d="M607 560V567.500A7.500 7.500 0 0 1 600.500 556Z" fill="#3aa757"/><path d="M607 560L613.500 556A7.500 7.500 0 0 1 607 567.500Z" fill="#f5c33b"/><circle cx="607" cy="560" r="3" fill="#4285f4"/><circle cx="612" cy="565" r="4.500" fill="#f4a6c4"/>
<rect x="592" y="574.500" width="30" height="1.500" fill="#a59ac4"/>
<rect x="626" y="546" width="36" height="30" fill="#f6f6f6"/>
<circle cx="643.500" cy="561" r="6" fill="#2fb37b"/><path d="M643.500 555A6 6 0 0 1 649.500 561H643.500Z" fill="#e8443a"/><path d="M637.500 561A6 6 0 0 1 643.500 555V561Z" fill="#f2a33a"/>
<rect x="626" y="574.500" width="36" height="1.500" fill="#a59ac4"/>
<path d="M762 563L766.500 558.500L771 563" fill="none" stroke="#222" stroke-width="1.200"/>
<rect x="785.500" y="553.500" width="11" height="13" fill="#fff" stroke="#999"/><text x="791" y="564.500" class="c" style="font-size:11px;font-weight:bold;fill:#c8382c">V</text>
<path d="M809 558.500H811L814 556V565L811 562.500H809ZM816 558C817 560 817 561 816 563M818.500 557C820 560 820 561 818.500 564" fill="none" stroke="#333" stroke-width=".9"/>
<rect x="834" y="557" width="11" height="7" fill="#111"/><rect x="833" y="559" width="1.500" height="3" fill="#111"/><path d="M835 554H838M843 554H846M836.500 554V557" stroke="#333"/>
<path d="M857 565L868 555V565Z" fill="#ccc"/><path d="M860 562L864 558M863 565V560" stroke="#888"/>
<path d="M883 567C888 565 886 561 890 558L893 555M887 563C891 564 893 560 891 557" fill="none" stroke="#222" stroke-width="1.200"/>
<text x="917" y="564" class="c" textLength="18" lengthAdjust="spacingAndGlyphs" style="font-size:9.500px;fill:#333">ENG</text>
<text x="957" y="558" class="c" textLength="30" lengthAdjust="spacingAndGlyphs" style="font-size:9.500px;fill:#333">4:05 CH</text>
<text x="957" y="572" class="c" textLength="43" lengthAdjust="spacingAndGlyphs" style="font-size:9.500px;fill:#333">30/08/2021</text>
<path d="M993 554H1005V565H1002L999 568V565H993Z" fill="#1c1c1c"/><path d="M995 557H1003M995 559.500H1003M995 562H1000" stroke="#eee" stroke-width=".8"/>
</svg>
</body></html>
